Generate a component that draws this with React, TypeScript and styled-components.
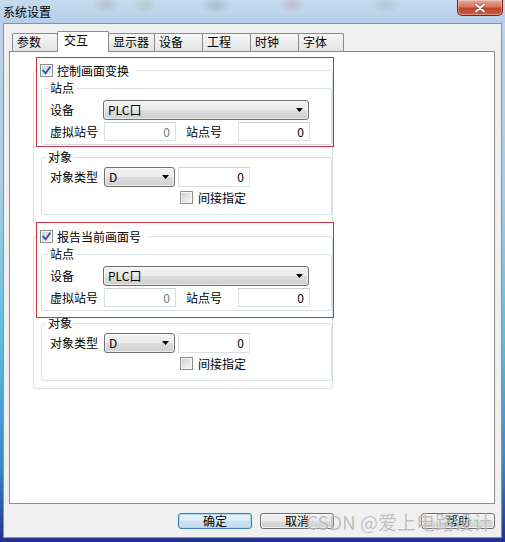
import React from "react";
import styled, { createGlobalStyle } from "styled-components";

const FONT = `"Noto Sans CJK SC", "Noto Sans", sans-serif`;

const Global = createGlobalStyle`
  html, body { margin: 0; padding: 0; background: #ffffff; }
  body { font-family: ${FONT}; font-size: 12px; color: #000; }
  * { box-sizing: border-box; }
`;

const Window = styled.div`
  position: relative;
  width: 505px;
  height: 542px;
  display: flex;
  flex-direction: column;
  overflow: hidden;
  background: linear-gradient(
    to bottom,
    #c0d6ed 0%,
    #a9cce6 35%,
    #5fbedb 62%,
    #3f86c8 86%,
    #22308e 100%
  );
`;

const TitleBar = styled.div`
  flex: none;
  height: 23px;
  display: flex;
  align-items: center;
  padding-left: 3px;
  background:
    radial-gradient(ellipse 14px 8px at 106px 5px, rgba(130, 110, 90, 0.22), transparent),
    radial-gradient(ellipse 12px 8px at 145px 5px, rgba(150, 160, 70, 0.25), transparent),
    radial-gradient(ellipse 16px 8px at 216px 5px, rgba(70, 80, 100, 0.22), transparent),
    radial-gradient(ellipse 14px 8px at 292px 4px, rgba(170, 80, 80, 0.2), transparent),
    radial-gradient(ellipse 16px 8px at 385px 5px, rgba(110, 120, 130, 0.18), transparent),
    linear-gradient(to bottom, #c6dbef 0%, #b5cee8 100%);
`;

const Title = styled.span`
  font-size: 12px;
  line-height: 14px;
  color: #000;
`;

const CloseButton = styled.div`
  margin-left: auto;
  margin-right: 2px;
  align-self: flex-start;
  width: 46px;
  height: 16px;
  border: 1px solid #6e2a20;
  border-top: none;
  border-radius: 0 0 5px 5px;
  background: linear-gradient(
    to bottom,
    #eba796 0%,
    #d87561 45%,
    #c2432b 55%,
    #cf5d41 100%
  );
  box-shadow: inset 0 0 0 1px rgba(255, 255, 255, 0.35);
  display: flex;
  align-items: center;
  justify-content: center;
`;

const Body = styled.div`
  flex: none;
  height: 515px;
  margin: 0 3px;
  background: #f0f0f0;
  border: 1px solid #8294aa;
  padding: 7px 6px 0 5px;
  display: flex;
  flex-direction: column;
`;

const TabStrip = styled.div`
  position: relative;
  z-index: 1;
  height: 20px;
  display: flex;
  align-items: flex-end;
  padding-left: 3px;
`;

const Tab = styled.div<{ $w: number; $active?: boolean }>`
  flex: none;
  width: ${(p) => p.$w}px;
  height: ${(p) => (p.$active ? 21 : 18)}px;
  margin-bottom: ${(p) => (p.$active ? -1 : 0)}px;
  margin-left: -1px;
  &:first-child { margin-left: 0; }
  position: relative;
  z-index: ${(p) => (p.$active ? 2 : 1)};
  border: 1px solid #898c95;
  border-bottom: none;
  border-radius: 2px 2px 0 0;
  background: ${(p) =>
    p.$active ? "#ffffff" : "linear-gradient(to bottom, #f6f6f6 0%, #e4e4e4 100%)"};
  padding-left: ${(p) => (p.$active ? 6 : 4)}px;
  font-size: 12px;
  line-height: 16px;
  white-space: nowrap;
`;

const Panel = styled.div`
  position: relative;
  height: 453px;
  background: #ffffff;
  border: 1px solid #898c95;
  padding: 12px 0 0 23px;
`;

const GroupBox = styled.fieldset<{ $mt: number }>`
  margin: ${(p) => p.$mt}px 0 0 0;
  padding: 0;
  min-width: 0;
  border: 1px solid #d5dfe5;
  border-radius: 3px;
`;

const OuterGroup = styled(GroupBox)`
  width: 300px;
`;

const OuterContent = styled.div`
  padding: 0 0 7px 7px;
`;

const InnerContent = styled.div<{ $pt: number; $pb: number }>`
  padding: ${(p) => p.$pt}px 0 ${(p) => p.$pb}px 8px;
`;

const CheckLegend = styled.legend`
  display: flex;
  align-items: center;
  gap: 4px;
  height: 13px;
  line-height: 13px;
  margin-left: 4px;
  padding: 0 7px 0 2px;
  font-size: 12px;
`;

const TextLegend = styled.legend<{ $ml: number }>`
  height: 14px;
  line-height: 14px;
  margin-left: ${(p) => p.$ml}px;
  padding: 0 2px;
  font-size: 12px;
`;

const Row = styled.div<{ $h: number; $mt?: number; $pl?: number }>`
  display: flex;
  align-items: center;
  height: ${(p) => p.$h}px;
  margin-top: ${(p) => p.$mt ?? 0}px;
  padding-left: ${(p) => p.$pl ?? 0}px;
`;

const Label = styled.span<{ $w?: number; $ml?: number }>`
  flex: none;
  width: ${(p) => (p.$w ? `${p.$w}px` : "auto")};
  margin-left: ${(p) => p.$ml ?? 0}px;
  white-space: nowrap;
  font-size: 12px;
  line-height: 14px;
`;

const Combo = styled.div<{ $w: number }>`
  flex: none;
  position: relative;
  width: ${(p) => p.$w}px;
  height: 20px;
  border: 1px solid #707070;
  border-radius: 3px;
  background: linear-gradient(
    to bottom,
    #f2f2f2 0%,
    #ebebeb 50%,
    #dddddd 50%,
    #cfcfcf 100%
  );
  box-shadow: inset 0 0 0 1px rgba(255, 255, 255, 0.6);
  display: flex;
  align-items: center;
  padding: 0 5px 0 4px;
  font-size: 12px;
  line-height: 14px;
`;

const ComboText = styled.span`
  flex: 1;
  white-space: nowrap;
`;

const NumField = styled.div<{ $w: number; $h: number; $ml?: number; $muted?: boolean }>`
  flex: none;
  width: ${(p) => p.$w}px;
  height: ${(p) => p.$h}px;
  margin-left: ${(p) => p.$ml ?? 0}px;
  background: #ffffff;
  border: 1px solid #dcdfe4;
  border-top-color: #cdd0d6;
  text-align: right;
  padding-right: 5px;
  font-size: 12px;
  line-height: ${(p) => p.$h - 2}px;
  color: ${(p) => (p.$muted ? "#7a7a7a" : "#000000")};
`;

const CheckBox = styled.span`
  flex: none;
  width: 13px;
  height: 13px;
  border: 1px solid #8f8f8f;
  background: linear-gradient(135deg, #c9cdd3 0%, #eeeeee 70%, #f8f8f8 100%);
  box-shadow: inset 0 0 0 1px #f6f6f6;
  display: flex;
  align-items: center;
  justify-content: center;
`;

const Annotation = styled.div<{ $top: number; $h: number }>`
  position: absolute;
  left: 26px;
  top: ${(p) => p.$top}px;
  width: 298px;
  height: ${(p) => p.$h}px;
  border: 1px solid #c8323c;
  pointer-events: none;
`;

const ButtonRow = styled.div`
  margin-top: 9px;
  height: 16px;
  display: flex;
  justify-content: flex-end;
  gap: 8px;
`;

const Button = styled.div<{ $default?: boolean; $ml?: number }>`
  flex: none;
  width: 74px;
  height: 16px;
  margin-left: ${(p) => p.$ml ?? 0}px;
  border: 1px solid ${(p) => (p.$default ? "#3c7fb1" : "#707070")};
  border-radius: 3px;
  background: ${(p) =>
    p.$default
      ? "linear-gradient(to bottom, #eaf4fb 0%, #dcecf7 50%, #cde3f2 50%, #c1dcef 100%)"
      : "linear-gradient(to bottom, #f2f2f2 0%, #ebebeb 50%, #dddddd 50%, #cfcfcf 100%)"};
  box-shadow: inset 0 0 0 1px ${(p) => (p.$default ? "#a9dbf6" : "rgba(255,255,255,0.7)")};
  text-align: center;
  font-size: 12px;
  line-height: 14px;
`;

const Watermark = styled.div`
  position: absolute;
  left: 306px;
  top: 509px;
  font-family: ${FONT};
  font-size: 19px;
  line-height: 26px;
  color: rgba(150, 150, 150, 0.6);
  text-shadow: 0 0 1px rgba(255, 255, 255, 0.8);
  white-space: nowrap;
  pointer-events: none;
  z-index: 5;
`;

const Check = () => (
  <svg width="9" height="9" viewBox="0 0 9 9">
    <path d="M1.2 4.6 L3.6 7.2 L7.9 1.4" fill="none" stroke="#3a56a0" strokeWidth="1.9" strokeLinecap="square" />
  </svg>
);

const Arrow = () => (
  <svg width="7" height="4" viewBox="0 0 7 4">
    <polygon points="0,0 7,0 3.5,4" fill="#000" />
  </svg>
);

const CloseGlyph = () => (
  <svg width="12" height="10" viewBox="0 0 12 10">
    <path d="M2 1.5 L10 8.5 M10 1.5 L2 8.5" stroke="#5a2a24" strokeWidth="3.4" strokeLinecap="round" opacity="0.55" />
    <path d="M2 1.5 L10 8.5 M10 1.5 L2 8.5" stroke="#ffffff" strokeWidth="2.2" strokeLinecap="round" />
  </svg>
);

const tabs = [
  { label: "参数", w: 46 },
  { label: "交互", w: 52, active: true },
  { label: "显示器", w: 47 },
  { label: "设备", w: 49 },
  { label: "工程", w: 49 },
  { label: "时钟", w: 49 },
  { label: "字体", w: 46 },
];

const SettingsGroup = ({ title, mt }: { title: string; mt: number }) => (
  <OuterGroup $mt={mt}>
    <CheckLegend>
      <CheckBox>
        <Check />
      </CheckBox>
      <span>{title}</span>
    </CheckLegend>
    <OuterContent>
      <GroupBox $mt={4}>
        <TextLegend $ml={6}>站点</TextLegend>
        <InnerContent $pt={5} $pb={3}>
          <Row $h={20}>
            <Label $w={53}>设备</Label>
            <Combo $w={206}>
              <ComboText>PLC口</ComboText>
              <Arrow />
            </Combo>
          </Row>
          <Row $h={19} $mt={2}>
            <Label $w={54}>虚拟站号</Label>
            <NumField $w={72} $h={19} $muted>
              0
            </NumField>
            <Label $w={52} $ml={10}>
              站点号
            </Label>
            <NumField $w={72} $h={19}>
              0
            </NumField>
          </Row>
        </InnerContent>
      </GroupBox>
      <GroupBox $mt={5}>
        <TextLegend $ml={4}>对象</TextLegend>
        <InnerContent $pt={3} $pb={10}>
          <Row $h={20}>
            <Label $w={54}>对象类型</Label>
            <Combo $w={71}>
              <ComboText>D</ComboText>
              <Arrow />
            </Combo>
            <NumField $w={72} $h={20} $ml={3}>
              0
            </NumField>
          </Row>
          <Row $h={13} $mt={4} $pl={130}>
            <CheckBox />
            <Label $ml={5}>间接指定</Label>
          </Row>
        </InnerContent>
      </GroupBox>
    </OuterContent>
  </OuterGroup>
);

export default function App() {
  return (
    <>
      <Global />
      <Window>
        <TitleBar>
          <Title>系统设置</Title>
          <CloseButton>
            <CloseGlyph />
          </CloseButton>
        </TitleBar>
        <Body>
          <TabStrip>
            {tabs.map((t) => (
              <Tab key={t.label} $w={t.w} $active={t.active}>
                {t.label}
              </Tab>
            ))}
          </TabStrip>
          <Panel>
            <SettingsGroup title="控制画面变换" mt={0} />
            <SettingsGroup title="报告当前画面号" mt={7} />
            <Annotation $top={5} $h={90} />
            <Annotation $top={170} $h={96} />
          </Panel>
          <ButtonRow>
            <Button $default>确定</Button>
            <Button>取消</Button>
            <Button $ml={79}>帮助</Button>
          </ButtonRow>
        </Body>
        <Watermark>CSDN @爱上电路设计</Watermark>
      </Window>
    </>
  );
}
